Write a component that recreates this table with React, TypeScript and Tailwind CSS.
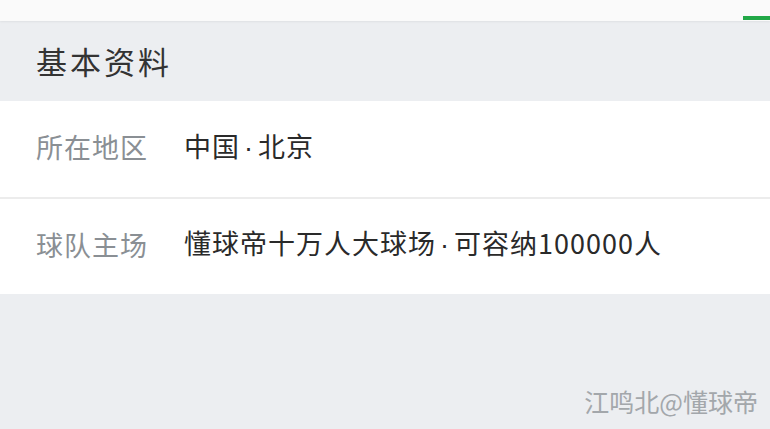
export default function App() {
  const font = { fontFamily: '"Noto Sans CJK SC", "Noto Sans", sans-serif' };
  const dot = "font-['Liberation_Sans',sans-serif] mx-[4px]";
  return (
    <div className="w-[770px] h-[429px] bg-[#eceef1] overflow-hidden flex flex-col" style={font}>
      {/* top tab strip */}
      <div className="h-[21px] bg-[#fafafa] shadow-[0_1px_2px_rgba(0,0,0,0.06)] flex justify-end items-end">
        <div className="w-[27px] h-[4px] bg-[#22a847] mb-[1px]" />
      </div>

      <div className="h-[80px] flex items-center px-[36px] pb-[2px] text-[31px] tracking-[3px] text-[#333] leading-none">
        基本资料
      </div>

      <div className="bg-white">
        <div className="h-[96px] flex items-center px-[36px] pb-[5px] text-[27px] tracking-[1px] leading-none">
          <span className="w-[148px] text-[#8a8f94]">所在地区</span>
          <span className="text-[#2a2a2a]">
            中国<span className={dot}>·</span>北京
          </span>
        </div>
        <div className="h-[2px] bg-[#ececec]" />
        <div className="h-[95px] flex items-center px-[36px] pb-[5px] text-[27px] tracking-[1px] leading-none">
          <span className="w-[148px] text-[#8a8f94]">球队主场</span>
          <span className="text-[#2a2a2a]">
            懂球帝十万人大球场<span className={dot}>·</span>可容纳100000人
          </span>
        </div>
      </div>

      <div className="flex-1 flex items-end justify-end pr-[12px] pb-[15px]">
        <span className="text-[25px] text-[#a3a7ab] leading-none">江鸣北@懂球帝</span>
      </div>
    </div>
  );
}
